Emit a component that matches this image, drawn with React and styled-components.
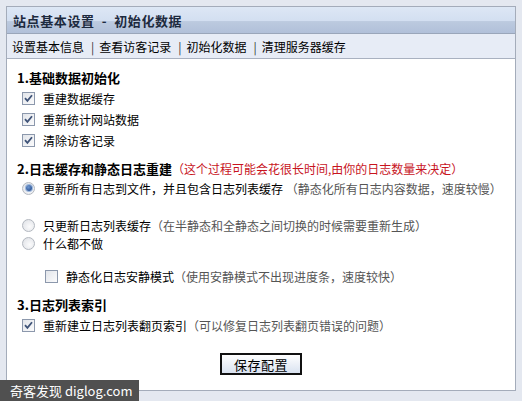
import React from 'react';
import styled, { createGlobalStyle } from 'styled-components';

const GlobalStyle = createGlobalStyle`
  html, body {
    margin: 0;
    padding: 0;
    background: #e4e8f0;
  }
  body {
    font-family: "Noto Sans CJK SC", "Liberation Sans", sans-serif;
    font-size: 12px;
    color: #000;
  }
`

const Page = styled.div`
  position: relative;
  width: 522px;
  height: 401px;
  padding: 6px 0 0 6px;
  box-sizing: border-box;
  overflow: hidden;
`

const Panel = styled.div`
  width: 510px;
  height: 385px;
  box-sizing: border-box;
  border: 1px solid #a4acba;
  background: #fff;
  display: flex;
  flex-direction: column;
`

const Header = styled.div`
  height: 26px;
  display: flex;
  align-items: center;
  padding-left: 6px;
  background: linear-gradient(#dde7f5 0%, #d3dff1 52%, #bccadf 56%, #b1c0d9 100%);
  border-bottom: 1px solid #9aa6ba;
  font-size: 13px;
  font-weight: bold;
  color: #1d2a3e;
  letter-spacing: 0.6px;
  white-space: pre;
`

const Nav = styled.div`
  height: 24px;
  display: flex;
  align-items: center;
  padding-left: 5px;
  background: #e7ecf6;
  border-bottom: 1px solid #a9b1c0;
  font-size: 12px;
`

const NavLink = styled.span`
  color: #000;
`

const Sep = styled.span`
  margin: 0 5px 0 7px;
  color: #333;
`

const Body = styled.div`
  flex: 1;
  padding: 9px 10px 0 10px;
  display: flex;
  flex-direction: column;
`

const Heading = styled.div`
  height: 20px;
  line-height: 20px;
  font-size: 13px;
  font-weight: bold;
  margin-top: ${p => p.$top || 0}px;
`

const Note = styled.span`
  color: #c8141e;
  font-weight: normal;
  font-size: 12px;
`

const Row = styled.div`
  display: flex;
  align-items: center;
  height: ${p => p.$h || 21}px;
  padding-left: ${p => p.$indent || 5}px;
  margin-top: ${p => p.$top || 0}px;
  gap: 8px;
`

const Hint = styled.span`
  color: #555;
`

const Box = styled.span`
  width: 11px;
  height: 11px;
  border: 1px solid #8c98ac;
  background: linear-gradient(135deg, #e2e5ea, #fbfbfc);
  display: flex;
  align-items: center;
  justify-content: center;
  flex-shrink: 0;
`

const Radio = styled.span`
  width: 11px;
  height: 11px;
  border-radius: 50%;
  border: 1px solid #b3b8c0;
  background: radial-gradient(circle at 60% 60%, #fbfbfc, #dcdfe4);
  display: flex;
  align-items: center;
  justify-content: center;
  flex-shrink: 0;
  &::after {
    content: '';
    display: ${p => (p.$on ? 'block' : 'none')};
    width: 6px;
    height: 6px;
    border-radius: 50%;
    background: radial-gradient(circle at 40% 35%, #6f98d0, #163f85);
    box-shadow: 0 0 0 1px #9cb7dc;
  }
`

const Tick = () => (
  <svg width="9" height="9" viewBox="0 0 9 9">
    <path d="M1 4.2 L3.4 6.8 L8 1.2" fill="none" stroke="#3f5378" strokeWidth="1.8" />
  </svg>
)

const Check = ({ on, children, ...rest }) => (
  <Row {...rest}>
    <Box>{on ? <Tick /> : null}</Box>
    <span>{children}</span>
  </Row>
)

const Option = ({ on, children, ...rest }) => (
  <Row $h={18} {...rest}>
    <Radio $on={on} />
    <span>{children}</span>
  </Row>
)

const Actions = styled.div`
  display: flex;
  justify-content: center;
  margin-top: 17px;
`

const Button = styled.button`
  width: 82px;
  height: 22px;
  padding: 0;
  border: 2px solid #111;
  border-radius: 0;
  background: linear-gradient(#ffffff, #eef2f8 45%, #d9e2f0);
  font-family: "Noto Sans CJK SC", sans-serif;
  font-size: 13px;
  color: #000;
  letter-spacing: 0.5px;
  cursor: pointer;
`

const Watermark = styled.div`
  position: absolute;
  left: 0;
  bottom: 0;
  width: 139px;
  height: 21px;
  background: #505050;
  color: #fff;
  font-size: 13px;
  line-height: 21px;
  padding-left: 10px;
  box-sizing: border-box;
  font-family: "Noto Sans CJK SC", "Liberation Sans", sans-serif;
`

export default function App() {
  return (
    <Page>
      <GlobalStyle />
      <Panel>
        <Header>{'站点基本设置  -  初始化数据'}</Header>
        <Nav>
          <NavLink>设置基本信息</NavLink><Sep>|</Sep>
          <NavLink>查看访客记录</NavLink><Sep>|</Sep>
          <NavLink>初始化数据</NavLink><Sep>|</Sep>
          <NavLink>清理服务器缓存</NavLink>
        </Nav>
        <Body>
          <Heading>1.基础数据初始化</Heading>
          <Check on>重建数据缓存</Check>
          <Check on>重新统计网站数据</Check>
          <Check on>清除访客记录</Check>

          <Heading $top={8}>
            2.日志缓存和静态日志重建<Note>（这个过程可能会花很长时间,由你的日志数量来决定）</Note>
          </Heading>
          <Option on>
            更新所有日志到文件，并且包含日志列表缓存 <Hint>（静态化所有日志内容数据，速度较慢）</Hint>
          </Option>
          <Option $top={19}>
            只更新日志列表缓存<Hint>（在半静态和全静态之间切换的时候需要重新生成）</Hint>
          </Option>
          <Option>什么都不做</Option>
          <Check $h={18} $indent={28} $top={15}>
            静态化日志安静模式<Hint>（使用安静模式不出现进度条，速度较快）</Hint>
          </Check>

          <Heading $top={10}>3.日志列表索引</Heading>
          <Check on>
            重新建立日志列表翻页索引<Hint>（可以修复日志列表翻页错误的问题）</Hint>
          </Check>

          <Actions>
            <Button>保存配置</Button>
          </Actions>
        </Body>
      </Panel>
      <Watermark>奇客发现 diglog.com</Watermark>
    </Page>
  );
}
